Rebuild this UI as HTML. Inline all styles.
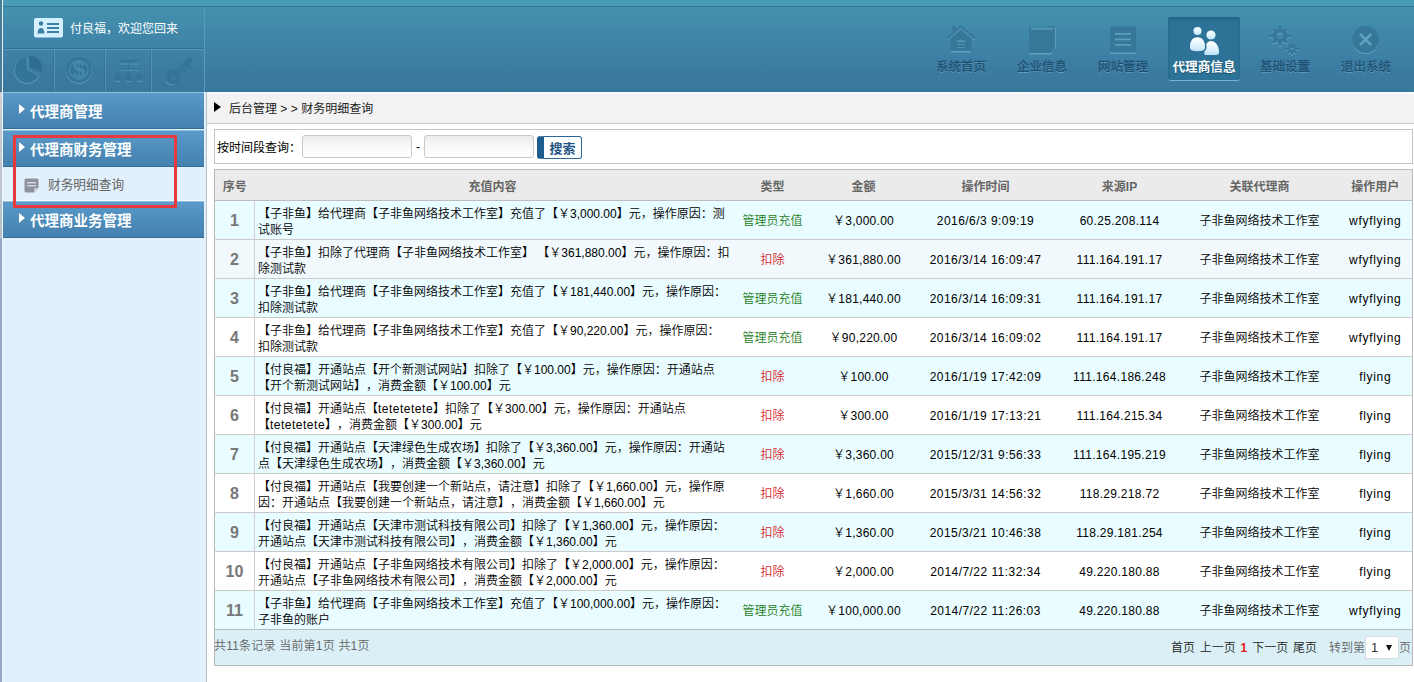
<!DOCTYPE html>
<html lang="zh-CN">
<head>
<meta charset="utf-8">
<title>财务明细查询</title>
<style>
*{box-sizing:border-box;margin:0;padding:0}
html,body{width:1414px;height:682px;overflow:hidden;background:#fff}
body{text-spacing-trim:space-all;font-family:"Liberation Sans","Noto Sans CJK SC",sans-serif;font-size:12px;color:#000;position:relative}
.abs{position:absolute}
/* header */
#topstrip{left:0;top:0;width:1414px;height:7px;background:#4a9bb7;border-bottom:1px solid #337492}
#header{left:0;top:7px;width:1414px;height:85px;background:linear-gradient(#4491ae,#4088aa 30%,#3e82a7 52%,#3c7aa0 78%,#3b789f 92%,#37779a)}
#hleft{left:3px;top:7px;width:202px;height:85px;border-right:1px solid #5a9bb8}
#edgeL{left:0;top:0;width:3px;height:92px;background:#4b7c96;border-right:1px solid #e6f2f7}
#edgeL2{left:0;top:92px;width:3px;height:590px;background:linear-gradient(#c9d0d6,#b4bfca 146px,#93a8c6 147px);border-right:1px solid #f0f6fb}
#urow{left:3px;top:8px;width:202px;height:41px;border-bottom:1px solid rgba(45,100,130,.6)}
#irow{left:3px;top:49px;width:202px;height:43px;border-top:1px solid rgba(110,170,200,.5)}
.vdiv{top:50px;width:2px;height:42px;border-left:1px solid rgba(45,105,135,.45);border-right:1px solid rgba(110,170,200,.45)}
#uname{left:70px;top:20px;color:#fff;font-size:12px;line-height:18px;white-space:nowrap}
/* nav */
.nav{top:17px;width:72px;height:64px;text-align:center}
.nav .t{position:absolute;left:-10px;right:-10px;top:42px;font-size:12.5px;line-height:16px;color:#1c5073;-webkit-text-stroke:.3px #1c5073;text-shadow:0 1px 0 rgba(120,180,205,.6);white-space:nowrap}
.nav.on{background:#2d7397;border-radius:3px;border-bottom:1px solid #78b2cf;box-shadow:inset 0 2px 3px rgba(20,75,105,.45)}
.nav.on .t{top:42px;-webkit-text-stroke:0;color:#fff;font-weight:bold;font-size:12.6px;text-shadow:0 1px 1px rgba(0,40,70,.5)}
.nav svg{position:absolute;left:50%;top:0}
/* sidebar */
#side{left:3px;top:92px;width:204px;height:590px;background:#e1f0fb;border-right:1px solid #b4c4cf}
.mh{left:3px;width:201px;height:37px;background:linear-gradient(#5c9bc9,#4d8cbb 50%,#4581b1);border-top:1px solid #8cc0e0;border-bottom:1px solid #356c95;color:#fff;font-weight:bold;font-size:14.5px;line-height:38px;white-space:nowrap}
.mh i{position:absolute;left:16px;top:11px;width:0;height:0;border-left:6px solid #fff;border-top:5px solid transparent;border-bottom:5px solid transparent}
.mh span{position:absolute;left:27px;top:0}
#sub{left:3px;top:167px;width:201px;height:34px;background:#e1f0fb;border-bottom:1px solid #f4fafe;color:#666;font-size:12.7px;line-height:36px}
#red{left:13px;top:135px;width:164px;height:73px;border:3px solid #e8393c}
/* main */
#main{left:207px;top:92px;width:1207px;height:590px;background:#fff}
#crumb{left:207px;top:92px;width:1207px;height:32px;border-top:2px solid #fcfcfe;background:#f2f2f2;border-bottom:1px solid #c8c8c8;font-size:12px;line-height:31px;color:#222}
#search{left:214px;top:129px;width:1199px;height:35px;border:1px solid #c4c4c4;background:#fff}
.inp{top:135px;width:110px;height:23px;border:1px solid #c9c9c9;border-radius:3px;background:linear-gradient(#ececec,#fbfbfb 60%,#fff)}
#btn{left:537px;top:136px;width:45px;height:23px;border:1px solid #2b6697;border-left:7px solid #1f5d8f;border-radius:3px;background:#fdfeff;color:#1f5482;font-weight:bold;font-size:13px;line-height:24px;text-align:center}
/* table */
table{position:absolute;left:214px;top:169px;width:1198px;border-collapse:collapse;table-layout:fixed;border:1px solid #b9b9b9;font-size:12px}
th{height:31px;background:#ebebeb;color:#666;font-weight:bold;font-size:12px;border-bottom:1px solid #bdbdbd;text-align:center;padding:0}
td{font-weight:350;height:39px;border-top:1px solid #cacaca;text-align:center;padding:2px 0 0;line-height:16px;vertical-align:middle;white-space:nowrap}
tr.o td{background:#e9fcff}
tr.h td{background:#f1f9fc}
td.n{font-weight:bold;font-size:16px;color:#777;border-right:1px solid #d0d0d0}
td.c{text-align:left;padding:4px 0 0 3px;white-space:normal}
.g{color:#1c7d1c}.r{color:#d8262c}
td:nth-child(4){letter-spacing:.25px}td:nth-child(5){letter-spacing:.45px}td:nth-child(6){letter-spacing:.3px}td:nth-child(8){letter-spacing:.7px}
.l{letter-spacing:.5px}
tr.f td{padding:0;height:36px;background:#daf0f6;border-top:1px solid #b5bcc0;text-align:left;color:#666}
.pg{position:relative;height:35px}
.pl{position:absolute;left:-1px;top:8px;letter-spacing:.2px;line-height:16px}
.pr{position:absolute;right:1px;top:9px;line-height:16px;white-space:nowrap}
.pr .k{color:#222;word-spacing:1.5px}.pr b{color:#e8201c}
.sel{display:inline-block;position:relative;width:34px;height:23px;vertical-align:middle;margin-top:-3px;background:#fff;border:1px solid #d4dde0;border-radius:2px;text-align:left;padding-left:5px;line-height:21px;color:#333;font-size:13px}
.sel i{position:absolute;left:20px;top:8px;border-top:6px solid #111;border-left:3.5px solid transparent;border-right:3.5px solid transparent}
</style>
</head>
<body>
<div class="abs" id="topstrip"></div>
<div class="abs" id="header"></div>
<div class="abs" id="hleft"></div>
<div class="abs" id="urow"></div>
<div class="abs" id="irow"></div>
<div class="abs vdiv" style="left:53px"></div>
<div class="abs vdiv" style="left:104px"></div>
<div class="abs vdiv" style="left:150px"></div>

<svg class="abs" style="left:3px;top:50px" width="202" height="42" viewBox="0 0 202 42">
<g transform="translate(0,1)" fill="none" stroke="rgba(120,185,212,.45)" stroke-width="1.200"><path d="M23.500 7.500A12.500 12.500 0 1 0 36 24"/><circle cx="75.800" cy="19.800" r="12.500"/><path d="M163 30a6 6 0 0 0 11 0"/></g>
<g fill="#34749a">
<path d="M23.500 7.500A12.500 12.500 0 1 0 35.500 25.500L23.500 20Z"/>
<path d="M26.500 5.500A12.500 12.500 0 0 1 38.500 22L26.500 17Z" fill="#2f6c92"/>
<path d="M24.500 8v11.500l10.500 5" fill="none" stroke="#4f92b2" stroke-width="1"/>
<circle cx="75.800" cy="19.800" r="12.800"/>
<circle cx="75.800" cy="19.800" r="9.300" fill="none" stroke="#4889aa" stroke-width="1.400"/>
<rect x="117.500" y="9.500" width="17" height="3"/><rect x="117.500" y="13.500" width="17" height="1" fill="rgba(120,185,212,.45)"/>
<path d="M125.500 13v6M114.700 26v-6.500h21.600v6.500M125.500 19v7" fill="none" stroke="#34749a" stroke-width="1.600"/>
<rect x="114" y="19.800" width="23" height="1" fill="rgba(120,185,212,.45)"/>
<circle cx="114.700" cy="27" r="3.200"/><circle cx="125.500" cy="27" r="3.200"/><circle cx="136.400" cy="27" r="3.200"/>
<rect x="112" y="31" width="5" height="1" fill="rgba(120,185,212,.45)"/><rect x="123" y="31" width="5" height="1" fill="rgba(120,185,212,.45)"/><rect x="134" y="31" width="5" height="1" fill="rgba(120,185,212,.45)"/>
<path d="M172 24L187.500 9.500" stroke="#34749a" stroke-width="4.500" stroke-linecap="round"/>
<path d="M180 19.500l3 3M184 15.500l3 3" stroke="#34749a" stroke-width="2.400"/>
<circle cx="170" cy="27" r="5.200" fill="none" stroke="#34749a" stroke-width="4"/>
</g>
<text x="75.800" y="28" text-anchor="middle" font-family="Liberation Sans, sans-serif" font-weight="bold" font-size="23" fill="#4687a9">$</text>
</svg>
<div class="abs" id="edgeL"></div>
<div class="abs" id="edgeL2"></div>
<svg class="abs" style="left:34px;top:18px" width="29" height="20" viewBox="0 0 29 20"><rect x="0" y="0" width="29" height="19.5" rx="2" fill="#d4f0ff"/><circle cx="7" cy="5.5" r="2.2" fill="#3f7f9f"/><path d="M3.5 15.5c0-3.5 1.5-5.5 3.5-5.500s3.500 2 3.500 5.500z" fill="#3f7f9f"/><rect x="13" y="5" width="12" height="2" fill="#3f7f9f"/><rect x="13" y="9" width="12" height="2" fill="#3f7f9f"/><rect x="13" y="13" width="12" height="2" fill="#3f7f9f"/></svg>
<div class="abs" id="uname">付良福，欢迎您回来</div>


<div class="abs nav" style="left:925px"><svg style="margin-left:-18px" width="36" height="40" viewBox="0 0 36 40"><g transform="translate(0,1)" fill="rgba(140,200,225,.45)" stroke="rgba(140,200,225,.45)"><path d="M4 21.500L18 9.500L32 21.500" fill="none" stroke-width="2.400"/><rect x="8" y="26" width="20" height="8.500" stroke="none"/></g><g fill="#377799"><path d="M4 21.500L18 9.500L32 21.500" fill="none" stroke="#377799" stroke-width="2.400"/><rect x="9.500" y="9" width="3" height="6"/><path d="M18 12.500L28.500 21.500V34H7.500V21.500Z"/><rect x="14" y="23.500" width="8" height="1.300" fill="#5fa3c0"/><rect x="14" y="27" width="8" height="1" fill="#4c8dad"/><rect x="14" y="30" width="8" height="1" fill="#4c8dad"/></g></svg><div class="t">系统首页</div></div>
<div class="abs nav" style="left:1006px"><svg style="margin-left:-18px" width="36" height="40" viewBox="0 0 36 40"><rect x="5" y="11" width="23" height="26.500" rx="2" fill="rgba(140,200,225,.45)"/><rect x="24" y="9" width="8" height="23" fill="#377799" opacity=".8"/><rect x="31" y="10" width="1" height="22" fill="#5b9dba"/><rect x="5" y="10" width="23" height="26" rx="2" fill="#377799"/><rect x="7" y="10.500" width="22" height="2.500" fill="#4f93b2"/></svg><div class="t">企业信息</div></div>
<div class="abs nav" style="left:1087px"><svg style="margin-left:-18px" width="36" height="40" viewBox="0 0 36 40"><rect x="5" y="10.500" width="26" height="26.500" rx="1.500" fill="rgba(140,200,225,.45)"/><rect x="5" y="9.500" width="26" height="26" rx="1.500" fill="#377799"/><rect x="10" y="16" width="16" height="1.800" fill="#5b9ebb"/><rect x="10" y="21.500" width="16" height="1.800" fill="#5b9ebb"/><rect x="10" y="27" width="16" height="1.800" fill="#5b9ebb"/></svg><div class="t">网站管理</div></div>
<div class="abs nav on" style="left:1168px"><svg style="margin-left:-18px" width="36" height="40" viewBox="0 0 36 40"><defs><linearGradient id="pg" x1="0" y1="0" x2="0" y2="1"><stop offset="0" stop-color="#fff"/><stop offset=".5" stop-color="#e4f5fe"/><stop offset="1" stop-color="#b9e2f8"/></linearGradient></defs><g fill="url(#pg)"><circle cx="25" cy="18" r="4.600"/><path d="M18.500 38c-1-7 1.500-14 6.500-14s8.500 6 8 11.500c-.3 2.500-2.500 2.500-4 2.500z"/><g stroke="#2f7299" stroke-width="1.600"><circle cx="11.500" cy="14" r="4.800"/><path d="M3.200 31c-.8-6 2.300-11.500 8.300-11.500s9 5.500 8.300 11.500c-.4 3.500-3.300 4-8.300 4s-7.900-.5-8.300-4z"/></g></g></svg><div class="t">代理商信息</div></div>
<div class="abs nav" style="left:1249px"><svg style="margin-left:-18px" width="36" height="40" viewBox="0 0 36 40"><g transform="translate(2,9)"><path transform="translate(0,1)" d="M18.0 8.4 L20.9 8.7 L20.9 11.3 L18.0 11.6 L17.1 13.9 L18.9 16.1 L17.1 17.9 L14.9 16.1 L12.6 17.0 L12.3 19.9 L9.7 19.9 L9.4 17.0 L7.1 16.1 L4.9 17.9 L3.1 16.1 L4.9 13.9 L4.0 11.6 L1.1 11.3 L1.1 8.7 L4.0 8.4 L4.9 6.1 L3.1 3.9 L4.9 2.1 L7.1 3.9 L9.4 3.0 L9.7 0.1 L12.3 0.1 L12.6 3.0 L14.9 3.9 L17.1 2.1 L18.9 3.9 L17.1 6.1Z M14.2 10.0 A3.2 3.2 0 1 0 7.8 10.0 A3.2 3.2 0 1 0 14.2 10.0Z M26.9 22.1 L28.9 22.2 L28.9 23.8 L26.9 23.9 L26.4 25.1 L27.8 26.6 L26.6 27.8 L25.1 26.4 L23.9 26.9 L23.8 28.9 L22.2 28.9 L22.1 26.9 L20.9 26.4 L19.4 27.8 L18.2 26.6 L19.6 25.1 L19.1 23.9 L17.1 23.8 L17.1 22.2 L19.1 22.1 L19.6 20.9 L18.2 19.4 L19.4 18.2 L20.9 19.6 L22.1 19.1 L22.2 17.1 L23.8 17.1 L23.9 19.1 L25.1 19.6 L26.6 18.2 L27.8 19.4 L26.4 20.9Z M24.6 23.0 A1.6 1.6 0 1 0 21.4 23.0 A1.6 1.6 0 1 0 24.6 23.0Z" fill="rgba(140,200,225,.45)" fill-rule="evenodd"/><path d="M18.0 8.4 L20.9 8.7 L20.9 11.3 L18.0 11.6 L17.1 13.9 L18.9 16.1 L17.1 17.9 L14.9 16.1 L12.6 17.0 L12.3 19.9 L9.7 19.9 L9.4 17.0 L7.1 16.1 L4.9 17.9 L3.1 16.1 L4.9 13.9 L4.0 11.6 L1.1 11.3 L1.1 8.7 L4.0 8.4 L4.9 6.1 L3.1 3.9 L4.9 2.1 L7.1 3.9 L9.4 3.0 L9.7 0.1 L12.3 0.1 L12.6 3.0 L14.9 3.9 L17.1 2.1 L18.9 3.9 L17.1 6.1Z M14.2 10.0 A3.2 3.2 0 1 0 7.8 10.0 A3.2 3.2 0 1 0 14.2 10.0Z M26.9 22.1 L28.9 22.2 L28.9 23.8 L26.9 23.9 L26.4 25.1 L27.8 26.6 L26.6 27.8 L25.1 26.4 L23.9 26.9 L23.8 28.9 L22.2 28.9 L22.1 26.9 L20.9 26.4 L19.4 27.8 L18.2 26.6 L19.6 25.1 L19.1 23.9 L17.1 23.8 L17.1 22.2 L19.1 22.1 L19.6 20.9 L18.2 19.4 L19.4 18.2 L20.9 19.6 L22.1 19.1 L22.2 17.1 L23.8 17.1 L23.9 19.1 L25.1 19.6 L26.6 18.2 L27.8 19.4 L26.4 20.9Z M24.6 23.0 A1.6 1.6 0 1 0 21.4 23.0 A1.6 1.6 0 1 0 24.6 23.0Z" fill="#377799" fill-rule="evenodd"/></g></svg><div class="t">基础设置</div></div>
<div class="abs nav" style="left:1330px"><svg style="margin-left:-18px" width="36" height="40" viewBox="0 0 36 40"><circle cx="17.600" cy="23.500" r="13.500" fill="rgba(140,200,225,.45)"/><circle cx="17.600" cy="22.500" r="13.500" fill="#377799"/><path d="M12 17l11.200 11.200M23.200 17L12 28.200" stroke="#5fa2bf" stroke-width="2.600" fill="none"/></svg><div class="t">退出系统</div></div>
<div class="abs" id="side"></div>
<div class="abs mh" style="top:92px"><i></i><span>代理商管理</span></div>
<div class="abs mh" style="top:130px"><i></i><span>代理商财务管理</span></div>
<div class="abs" id="sub"><svg style="position:absolute;left:21px;top:11px" width="15" height="15" viewBox="0 0 15 15"><path d="M2 0.500h11a1.500 1.500 0 0 1 1.500 1.500v8l-4.500 4.500h-8a1.500 1.500 0 0 1-1.500-1.500v-11a1.500 1.500 0 0 1 1.500-1.500z" fill="#8c919b"/><rect x="3" y="4" width="9" height="1.400" fill="#d5dae2"/><rect x="3" y="7" width="9" height="1.400" fill="#d5dae2"/><path d="M10 14.500v-3.500a1 1 0 0 1 1-1h3.500z" fill="#c9ced8"/></svg><span style="position:absolute;left:45px">财务明细查询</span></div>
<div class="abs mh" style="top:201px"><i></i><span>代理商业务管理</span></div>
<div class="abs" id="red"></div>

<div class="abs" id="main"></div>
<div class="abs" id="crumb"><i style="position:absolute;left:7px;top:8px;border-left:7px solid #000;border-top:5px solid transparent;border-bottom:5px solid transparent"></i><span style="position:absolute;left:22px">后台管理 <span style="letter-spacing:3.5px">&gt;&gt;</span>财务明细查询</span></div>
<div class="abs" id="search"></div>
<div class="abs" style="left:217px;top:139px;line-height:18px;font-size:12px">按时间段查询：</div>
<div class="abs inp" style="left:302px"></div>
<div class="abs" style="left:416px;top:138px;line-height:18px">-</div>
<div class="abs inp" style="left:424px"></div>
<div class="abs" id="btn">搜索</div>
<table>
<colgroup><col style="width:40px"><col style="width:476px"><col style="width:84px"><col style="width:98px"><col style="width:146px"><col style="width:122px"><col style="width:158px"><col style="width:74px"></colgroup>
<tr><th>序号</th><th>充值内容</th><th>类型</th><th>金额</th><th>操作时间</th><th>来源IP</th><th>关联代理商</th><th>操作用户</th></tr>
<tr class="o"><td class="n">1</td><td class="c">【子非鱼】给代理商【子非鱼网络技术工作室】充值了【￥3,000.00】元，操作原因：测<br>试账号</td><td class="g">管理员充值</td><td>￥3,000.00</td><td>2016/6/3 9:09:19</td><td>60.25.208.114</td><td>子非鱼网络技术工作室</td><td>wfyflying</td></tr>
<tr class="h"><td class="n">2</td><td class="c">【子非鱼】扣除了代理商【子非鱼网络技术工作室】 【￥361,880.00】元，操作原因：扣<br>除测试款</td><td class="r">扣除</td><td>￥361,880.00</td><td>2016/3/14 16:09:47</td><td>111.164.191.17</td><td>子非鱼网络技术工作室</td><td>wfyflying</td></tr>
<tr class="o"><td class="n">3</td><td class="c">【子非鱼】给代理商【子非鱼网络技术工作室】充值了【￥181,440.00】元，操作原因：<br>扣除测试款</td><td class="g">管理员充值</td><td>￥181,440.00</td><td>2016/3/14 16:09:31</td><td>111.164.191.17</td><td>子非鱼网络技术工作室</td><td>wfyflying</td></tr>
<tr class="e"><td class="n">4</td><td class="c">【子非鱼】给代理商【子非鱼网络技术工作室】充值了【￥90,220.00】元，操作原因：<br>扣除测试款</td><td class="g">管理员充值</td><td>￥90,220.00</td><td>2016/3/14 16:09:02</td><td>111.164.191.17</td><td>子非鱼网络技术工作室</td><td>wfyflying</td></tr>
<tr class="o"><td class="n">5</td><td class="c">【付良福】开通站点【开个新测试网站】扣除了【￥100.00】元，操作原因：开通站点<br>【开个新测试网站】，消费金额【￥100.00】元</td><td class="r">扣除</td><td>￥100.00</td><td>2016/1/19 17:42:09</td><td>111.164.186.248</td><td>子非鱼网络技术工作室</td><td>flying</td></tr>
<tr class="e"><td class="n">6</td><td class="c">【付良福】开通站点【<span class="l">tetetetete</span>】扣除了【￥300.00】元，操作原因：开通站点<br>【<span class="l">tetetetete</span>】，消费金额【￥300.00】元</td><td class="r">扣除</td><td>￥300.00</td><td>2016/1/19 17:13:21</td><td>111.164.215.34</td><td>子非鱼网络技术工作室</td><td>flying</td></tr>
<tr class="o"><td class="n">7</td><td class="c">【付良福】开通站点【天津绿色生成农场】扣除了【￥3,360.00】元，操作原因：开通站<br>点【天津绿色生成农场】，消费金额【￥3,360.00】元</td><td class="r">扣除</td><td>￥3,360.00</td><td>2015/12/31 9:56:33</td><td>111.164.195.219</td><td>子非鱼网络技术工作室</td><td>flying</td></tr>
<tr class="e"><td class="n">8</td><td class="c">【付良福】开通站点【我要创建一个新站点，请注意】扣除了【￥1,660.00】元，操作原<br>因：开通站点【我要创建一个新站点，请注意】，消费金额【￥1,660.00】元</td><td class="r">扣除</td><td>￥1,660.00</td><td>2015/3/31 14:56:32</td><td>118.29.218.72</td><td>子非鱼网络技术工作室</td><td>flying</td></tr>
<tr class="o"><td class="n">9</td><td class="c">【付良福】开通站点【天津市测试科技有限公司】扣除了【￥1,360.00】元，操作原因：<br>开通站点【天津市测试科技有限公司】，消费金额【￥1,360.00】元</td><td class="r">扣除</td><td>￥1,360.00</td><td>2015/3/21 10:46:38</td><td>118.29.181.254</td><td>子非鱼网络技术工作室</td><td>flying</td></tr>
<tr class="e"><td class="n">10</td><td class="c">【付良福】开通站点【子非鱼网络技术有限公司】扣除了【￥2,000.00】元，操作原因：<br>开通站点【子非鱼网络技术有限公司】，消费金额【￥2,000.00】元</td><td class="r">扣除</td><td>￥2,000.00</td><td>2014/7/22 11:32:34</td><td>49.220.180.88</td><td>子非鱼网络技术工作室</td><td>flying</td></tr>
<tr class="o"><td class="n">11</td><td class="c">【子非鱼】给代理商【子非鱼网络技术工作室】充值了【￥100,000.00】元，操作原因：<br>子非鱼的账户</td><td class="g">管理员充值</td><td>￥100,000.00</td><td>2014/7/22 11:26:03</td><td>49.220.180.88</td><td>子非鱼网络技术工作室</td><td>wfyflying</td></tr>
<tr class="f"><td colspan="8"><div class="pg"><span class="pl">共11条记录 当前第1页 共1页</span><span class="pr"><span class="k">首页 上一页 <b>1</b> 下一页 尾页</span>　转到第<span class="sel">1<i></i></span>页</span></div></td></tr>
</table>
</body>
</html>
